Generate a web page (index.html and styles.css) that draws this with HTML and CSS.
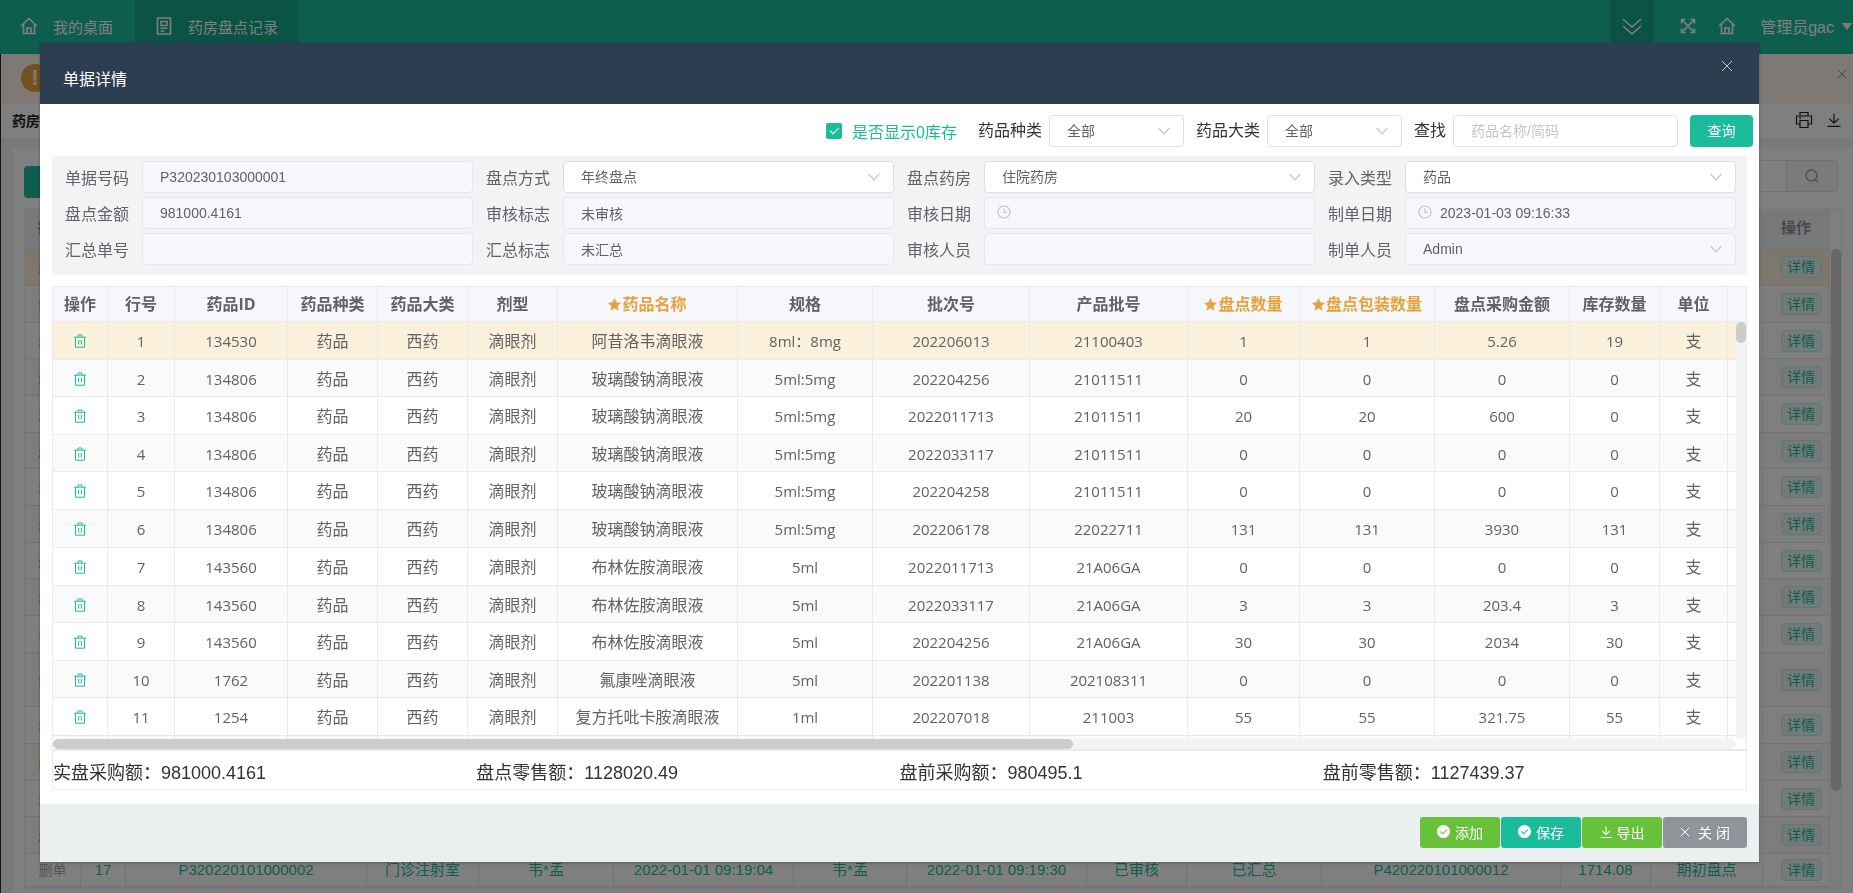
FILE: index.html
```html
<!DOCTYPE html>
<html lang="zh-CN">
<head>
  <meta charset="UTF-8">
  <meta name="viewport" content="width=device-width, initial-scale=1.0">
  <title>药房盘点记录</title>
  <link rel="stylesheet" href="styles.css">
</head>
<body>
  <!-- Icon sprite -->
  <svg class="sprite" aria-hidden="true">
    <symbol id="i-home" viewBox="0 0 18 18"><path d="M1 9 L9 1.5 L17 9 M3.5 7.5 V16.5 H14.5 V7.5 M7 16 V11 H11 V16"/></symbol>
    <symbol id="i-doc" viewBox="0 0 16 18"><path d="M1.5 1 H14.5 V17 H1.5 Z M5 4.5 H11 V8.5 H5 Z M4.5 11.2 H11.5 M4.5 14 H8.5"/></symbol>
    <symbol id="i-double-down" viewBox="0 0 20 18"><path d="M1 1 L10 9 L19 1 M1 8 L10 16 L19 8"/></symbol>
    <symbol id="i-full" viewBox="0 0 16 16"><path d="M1.5 5.5 V1.5 H5.5 M10.5 1.5 H14.5 V5.5 M14.5 10.5 V14.5 H10.5 M5.5 14.5 H1.5 V10.5 M2 2 L14 14 M14 2 L2 14"/></symbol>
    <symbol id="i-close" viewBox="0 0 12 12"><path d="M1 1 L11 11 M11 1 L1 11"/></symbol>
    <symbol id="i-down" viewBox="0 0 12 8"><path d="M0.7 1 L6 6.8 L11.3 1"/></symbol>
    <symbol id="i-clock" viewBox="0 0 14 14"><path d="M7 1 A6 6 0 1 1 6.9 1 Z M7 3.5 V7.5 H10"/></symbol>
    <symbol id="i-trash" viewBox="0 0 14 14"><path d="M1 3.2 H13 M5 3 V1 H9 V3 M2.5 3.2 V13.2 H11.5 V3.2 M5.7 6 V10.5 M8.3 6 V10.5"/></symbol>
    <symbol id="i-star" viewBox="0 0 12 12"><path d="M6 0 L7.7 4 L12 4.5 L8.8 7.4 L9.7 11.7 L6 9.5 L2.3 11.7 L3.2 7.4 L0 4.5 L4.3 4 Z"/></symbol>
    <symbol id="i-print" viewBox="0 0 18 18"><path d="M5 5 V1.5 H13 V5 M5 13 H1.5 V5 H16.5 V13 H13 M5 9.5 H13 V16.5 H5 Z M4 7.2 H6"/></symbol>
    <symbol id="i-download" viewBox="0 0 14 14"><path d="M7 0.5 V10 M2.5 5.8 L7 10.2 L11.5 5.8 M0.5 13.3 H13.5"/></symbol>
    <symbol id="i-search" viewBox="0 0 14 14"><path d="M6.5 1 A5.5 5.5 0 1 1 6.4 1 Z M10.5 10.8 L12.8 13"/></symbol>
    <symbol id="i-ok" viewBox="0 0 14 14"><path fill-rule="evenodd" d="M7 0 A7 7 0 1 1 6.9 0 Z M6.2 10.3 L11 5.3 L10.2 4.5 L6.2 8.6 L4 6.5 L3.2 7.3 Z"/></symbol>
  </svg>

  <!-- Page behind the dialog -->
  <header class="topbar">
    <nav class="tabs">
      <a class="tab" href="#"><svg class="icon icon-18"><use href="#i-home"/></svg>我的桌面</a>
      <a class="tab active" href="#"><svg class="icon icon-18"><use href="#i-doc"/></svg>药房盘点记录</a>
    </nav>
    <div class="tools">
      <button class="tool tool-more" aria-label="更多"><svg class="icon icon-20"><use href="#i-double-down"/></svg></button>
      <button class="tool" aria-label="全屏"><svg class="icon icon-16"><use href="#i-full"/></svg></button>
      <button class="tool" aria-label="首页"><svg class="icon icon-18"><use href="#i-home"/></svg></button>
      <button class="user">管理员gac<span class="caret"></span></button>
    </div>
  </header>
  <main class="page">
    <div class="notice">
      <span class="notice-icon">!</span>
      <button class="plain" aria-label="关闭提示"><svg class="icon icon-10"><use href="#i-close"/></svg></button>
    </div>
    <div class="page-title">
      <strong>药房盘点记录</strong>
      <div class="page-tools">
        <button class="plain" aria-label="打印"><svg class="icon icon-18"><use href="#i-print"/></svg></button>
        <button class="plain" aria-label="下载"><svg class="icon icon-14"><use href="#i-download"/></svg></button>
      </div>
    </div>
    <section class="card">
      <div class="card-bar">
        <button class="btn-new" aria-label="新增"></button>
        <div class="search">
          <input type="text" aria-label="搜索">
          <button aria-label="搜索"><svg class="icon icon-14"><use href="#i-search"/></svg></button>
        </div>
      </div>
      <div class="list-wrap">
        <table class="list">
          <colgroup>
            <col class="w56"><col class="w45"><col class="w241"><col class="w112"><col class="w135"><col class="w180"><col class="w113"><col class="w180"><col class="w100"><col class="w135"><col><col class="w90"><col class="w112"><col class="w67">
          </colgroup>
          <thead>
            <tr><th>操作</th><th colspan="12"></th><th>操作</th></tr>
          </thead>
          <tbody>
            <tr class="current"><td class="del">删单</td><td colspan="12"></td><td><a class="tag" href="#">详情</a></td></tr>
            <tr><td class="del">删单</td><td colspan="12"></td><td><a class="tag" href="#">详情</a></td></tr>
            <tr><td class="del">删单</td><td colspan="12"></td><td><a class="tag" href="#">详情</a></td></tr>
            <tr><td class="del">删单</td><td colspan="12"></td><td><a class="tag" href="#">详情</a></td></tr>
            <tr><td class="del">删单</td><td colspan="12"></td><td><a class="tag" href="#">详情</a></td></tr>
            <tr><td class="del">删单</td><td colspan="12"></td><td><a class="tag" href="#">详情</a></td></tr>
            <tr><td class="del">删单</td><td colspan="12"></td><td><a class="tag" href="#">详情</a></td></tr>
            <tr><td class="del">删单</td><td colspan="12"></td><td><a class="tag" href="#">详情</a></td></tr>
            <tr><td class="del">删单</td><td colspan="12"></td><td><a class="tag" href="#">详情</a></td></tr>
            <tr><td class="del">删单</td><td colspan="12"></td><td><a class="tag" href="#">详情</a></td></tr>
            <tr><td class="del">删单</td><td colspan="12"></td><td><a class="tag" href="#">详情</a></td></tr>
            <tr class="tall"><td class="del">删单</td><td colspan="12"></td><td><a class="tag" href="#">详情</a></td></tr>
            <tr><td class="del">删单</td><td colspan="12"></td><td><a class="tag" href="#">详情</a></td></tr>
            <tr><td class="del">删单</td><td colspan="12"></td><td><a class="tag" href="#">详情</a></td></tr>
            <tr><td class="del">删单</td><td colspan="12"></td><td><a class="tag" href="#">详情</a></td></tr>
            <tr><td class="del">删单</td><td colspan="12"></td><td><a class="tag" href="#">详情</a></td></tr>
            <tr><td class="off">删单</td><td>17</td><td>P320220101000002</td><td>门诊注射室</td><td>韦*孟</td><td>2022-01-01 09:19:04</td><td>韦*孟</td><td>2022-01-01 09:19:30</td><td>已审核</td><td>已汇总</td><td>P420220101000012</td><td>1714.08</td><td>期初盘点</td><td><a class="tag" href="#">详情</a></td></tr>
          </tbody>
        </table>
        <div class="list-scroll"><span></span></div>
      </div>
    </section>
  </main>

  <!-- Dialog -->
  <div class="mask">
    <div class="dialog" role="dialog" aria-labelledby="dialogTitle">
      <div class="dialog-head">
        <h1 id="dialogTitle">单据详情</h1>
        <button class="plain" aria-label="关闭"><svg class="icon icon-12"><use href="#i-close"/></svg></button>
      </div>

      <form class="filters">
        <label class="check"><input type="checkbox" checked>是否显示0库存</label>
        <div class="filter">
          <label for="kind">药品种类</label>
          <div class="control short"><select id="kind"><option>全部</option></select><svg class="icon arrow"><use href="#i-down"/></svg></div>
        </div>
        <div class="filter">
          <label for="category">药品大类</label>
          <div class="control short"><select id="category"><option>全部</option></select><svg class="icon arrow"><use href="#i-down"/></svg></div>
        </div>
        <div class="filter">
          <label for="keyword">查找</label>
          <div class="control keyword"><input id="keyword" type="text" placeholder="药品名称/简码"></div>
        </div>
        <button type="button" class="btn-query">查询</button>
      </form>

      <form class="detail">
        <div class="field"><label for="f1">单据号码</label><div class="control"><input id="f1" type="text" value="P320230103000001" disabled></div></div>
        <div class="field"><label for="f2">盘点方式</label><div class="control"><select id="f2"><option>年终盘点</option></select><svg class="icon arrow"><use href="#i-down"/></svg></div></div>
        <div class="field"><label for="f3">盘点药房</label><div class="control"><select id="f3"><option>住院药房</option></select><svg class="icon arrow"><use href="#i-down"/></svg></div></div>
        <div class="field"><label for="f4">录入类型</label><div class="control"><select id="f4"><option>药品</option></select><svg class="icon arrow"><use href="#i-down"/></svg></div></div>
        <div class="field"><label for="f5">盘点金额</label><div class="control"><input id="f5" type="text" value="981000.4161" disabled></div></div>
        <div class="field"><label for="f6">审核标志</label><div class="control"><input id="f6" type="text" value="未审核" disabled></div></div>
        <div class="field"><label for="f7">审核日期</label><div class="control date"><input id="f7" type="text" disabled><svg class="icon clock"><use href="#i-clock"/></svg></div></div>
        <div class="field"><label for="f8">制单日期</label><div class="control date"><input id="f8" type="text" value="2023-01-03 09:16:33" disabled><svg class="icon clock"><use href="#i-clock"/></svg></div></div>
        <div class="field"><label for="f9">汇总单号</label><div class="control"><input id="f9" type="text" disabled></div></div>
        <div class="field"><label for="f10">汇总标志</label><div class="control"><input id="f10" type="text" value="未汇总" disabled></div></div>
        <div class="field"><label for="f11">审核人员</label><div class="control"><input id="f11" type="text" disabled></div></div>
        <div class="field"><label for="f12">制单人员</label><div class="control"><select id="f12" disabled><option>Admin</option></select><svg class="icon arrow"><use href="#i-down"/></svg></div></div>
      </form>

      <div class="grid-wrap">
        <div class="grid-view">
          <table class="grid">
            <colgroup>
              <col class="w55"><col class="w67"><col class="w113"><col class="w90"><col class="w90"><col class="w90"><col class="w180"><col class="w135"><col class="w157"><col class="w158"><col class="w112"><col class="w135"><col class="w135"><col class="w90"><col class="w68"><col>
            </colgroup>
            <thead>
              <tr>
                <th>操作</th><th>行号</th><th>药品ID</th><th>药品种类</th><th>药品大类</th><th>剂型</th>
                <th class="edit"><svg class="star"><use href="#i-star"/></svg>药品名称</th>
                <th>规格</th><th>批次号</th><th>产品批号</th>
                <th class="edit"><svg class="star"><use href="#i-star"/></svg>盘点数量</th>
                <th class="edit"><svg class="star"><use href="#i-star"/></svg>盘点包装数量</th>
                <th>盘点采购金额</th><th>库存数量</th><th>单位</th><th></th>
              </tr>
            </thead>
            <tbody>
              <tr class="current"><td><button class="trash" aria-label="删除"><svg class="icon icon-14"><use href="#i-trash"/></svg></button></td><td>1</td><td>134530</td><td class="cn">药品</td><td class="cn">西药</td><td class="cn">滴眼剂</td><td class="cn">阿昔洛韦滴眼液</td><td>8ml：8mg</td><td>202206013</td><td>21100403</td><td>1</td><td>1</td><td>5.26</td><td>19</td><td class="cn">支</td><td></td></tr>
              <tr><td><button class="trash" aria-label="删除"><svg class="icon icon-14"><use href="#i-trash"/></svg></button></td><td>2</td><td>134806</td><td class="cn">药品</td><td class="cn">西药</td><td class="cn">滴眼剂</td><td class="cn">玻璃酸钠滴眼液</td><td>5ml:5mg</td><td>202204256</td><td>21011511</td><td>0</td><td>0</td><td>0</td><td>0</td><td class="cn">支</td><td></td></tr>
              <tr><td><button class="trash" aria-label="删除"><svg class="icon icon-14"><use href="#i-trash"/></svg></button></td><td>3</td><td>134806</td><td class="cn">药品</td><td class="cn">西药</td><td class="cn">滴眼剂</td><td class="cn">玻璃酸钠滴眼液</td><td>5ml:5mg</td><td>2022011713</td><td>21011511</td><td>20</td><td>20</td><td>600</td><td>0</td><td class="cn">支</td><td></td></tr>
              <tr><td><button class="trash" aria-label="删除"><svg class="icon icon-14"><use href="#i-trash"/></svg></button></td><td>4</td><td>134806</td><td class="cn">药品</td><td class="cn">西药</td><td class="cn">滴眼剂</td><td class="cn">玻璃酸钠滴眼液</td><td>5ml:5mg</td><td>2022033117</td><td>21011511</td><td>0</td><td>0</td><td>0</td><td>0</td><td class="cn">支</td><td></td></tr>
              <tr><td><button class="trash" aria-label="删除"><svg class="icon icon-14"><use href="#i-trash"/></svg></button></td><td>5</td><td>134806</td><td class="cn">药品</td><td class="cn">西药</td><td class="cn">滴眼剂</td><td class="cn">玻璃酸钠滴眼液</td><td>5ml:5mg</td><td>202204258</td><td>21011511</td><td>0</td><td>0</td><td>0</td><td>0</td><td class="cn">支</td><td></td></tr>
              <tr><td><button class="trash" aria-label="删除"><svg class="icon icon-14"><use href="#i-trash"/></svg></button></td><td>6</td><td>134806</td><td class="cn">药品</td><td class="cn">西药</td><td class="cn">滴眼剂</td><td class="cn">玻璃酸钠滴眼液</td><td>5ml:5mg</td><td>202206178</td><td>22022711</td><td>131</td><td>131</td><td>3930</td><td>131</td><td class="cn">支</td><td></td></tr>
              <tr><td><button class="trash" aria-label="删除"><svg class="icon icon-14"><use href="#i-trash"/></svg></button></td><td>7</td><td>143560</td><td class="cn">药品</td><td class="cn">西药</td><td class="cn">滴眼剂</td><td class="cn">布林佐胺滴眼液</td><td>5ml</td><td>2022011713</td><td>21A06GA</td><td>0</td><td>0</td><td>0</td><td>0</td><td class="cn">支</td><td></td></tr>
              <tr><td><button class="trash" aria-label="删除"><svg class="icon icon-14"><use href="#i-trash"/></svg></button></td><td>8</td><td>143560</td><td class="cn">药品</td><td class="cn">西药</td><td class="cn">滴眼剂</td><td class="cn">布林佐胺滴眼液</td><td>5ml</td><td>2022033117</td><td>21A06GA</td><td>3</td><td>3</td><td>203.4</td><td>3</td><td class="cn">支</td><td></td></tr>
              <tr><td><button class="trash" aria-label="删除"><svg class="icon icon-14"><use href="#i-trash"/></svg></button></td><td>9</td><td>143560</td><td class="cn">药品</td><td class="cn">西药</td><td class="cn">滴眼剂</td><td class="cn">布林佐胺滴眼液</td><td>5ml</td><td>202204256</td><td>21A06GA</td><td>30</td><td>30</td><td>2034</td><td>30</td><td class="cn">支</td><td></td></tr>
              <tr><td><button class="trash" aria-label="删除"><svg class="icon icon-14"><use href="#i-trash"/></svg></button></td><td>10</td><td>1762</td><td class="cn">药品</td><td class="cn">西药</td><td class="cn">滴眼剂</td><td class="cn">氟康唑滴眼液</td><td>5ml</td><td>202201138</td><td>202108311</td><td>0</td><td>0</td><td>0</td><td>0</td><td class="cn">支</td><td></td></tr>
              <tr><td><button class="trash" aria-label="删除"><svg class="icon icon-14"><use href="#i-trash"/></svg></button></td><td>11</td><td>1254</td><td class="cn">药品</td><td class="cn">西药</td><td class="cn">滴眼剂</td><td class="cn">复方托吡卡胺滴眼液</td><td>1ml</td><td>202207018</td><td>211003</td><td>55</td><td>55</td><td>321.75</td><td>55</td><td class="cn">支</td><td></td></tr>
              <tr><td></td><td></td><td></td><td></td><td></td><td></td><td></td><td></td><td></td><td></td><td></td><td></td><td></td><td></td><td></td><td></td></tr>
            </tbody>
          </table>
          <div class="scroll-y"><span></span></div>
        </div>
        <div class="scroll-x"><span></span></div>
        <div class="totals">
          <span>实盘采购额：981000.4161</span>
          <span>盘点零售额：1128020.49</span>
          <span>盘前采购额：980495.1</span>
          <span>盘前零售额：1127439.37</span>
        </div>
      </div>

      <div class="dialog-foot">
        <button class="btn green"><svg class="solid"><use href="#i-ok"/></svg>添加</button>
        <button class="btn teal"><svg class="solid"><use href="#i-ok"/></svg>保存</button>
        <button class="btn green"><svg class="icon icon-12"><use href="#i-download"/></svg>导出</button>
        <button class="btn gray"><svg class="icon icon-10"><use href="#i-close"/></svg>关 闭</button>
      </div>
    </div>
  </div>
</body>
</html>
```

FILE: styles.css
```css
* {
  box-sizing: border-box;
}

body {
  margin: 0;
  height: 100vh;
  overflow: hidden;
  display: flex;
  flex-direction: column;
  background: #fff;
  color: #606266;
  font-family: "Liberation Sans", "Noto Sans CJK SC", sans-serif;
  font-size: 16px;
}

button,
input,
select {
  font-family: inherit;
  font-size: 14px;
  margin: 0;
}

button {
  border: 0;
  padding: 0;
  background: none;
  color: inherit;
  cursor: pointer;
}

a {
  color: inherit;
  text-decoration: none;
}

/* Icons */
.sprite {
  position: absolute;
  width: 0;
  height: 0;
}

.icon {
  display: block;
  flex: none;
  fill: none;
  stroke: currentColor;
  stroke-width: 1.2;
}

.icon-10 { width: 10px; height: 10px; }
.icon-12 { width: 12px; height: 12px; }
.icon-14 { width: 14px; height: 14px; }
.icon-16 { width: 16px; height: 16px; }
.icon-18 { width: 18px; height: 18px; }
.icon-20 { width: 20px; height: 18px; }

.solid {
  width: 13px;
  height: 13px;
  fill: currentColor;
}

.plain {
  display: flex;
}

/* Top bar */
.topbar {
  flex: none;
  height: 54px;
  display: flex;
  justify-content: space-between;
  background: #1abc9c;
  color: #fff;
}

.topbar .icon {
  stroke-width: 1.6;
}

.tabs,
.tools {
  display: flex;
}

.tab {
  display: flex;
  align-items: center;
  gap: 15px;
  padding: 0 22px 2px 20px;
  font-size: 15px;
}

.tab.active {
  padding-right: 20px;
  background: #17a689;
}

.tools {
  align-items: center;
  padding-bottom: 2px;
}

.tool {
  display: flex;
  margin-right: 22px;
}

.tool-more {
  align-items: center;
  height: 54px;
  padding: 0 12px;
  margin-right: 26px;
  margin-bottom: -2px;
  background: #17a689;
}

.user {
  display: flex;
  align-items: center;
  gap: 8px;
  padding-right: 1px;
  padding-left: 2px;
  font-size: 16px;
}

.caret {
  border: 5px solid transparent;
  border-top: 7px solid #fff;
  border-bottom: 0;
}

/* Page content */
.page {
  flex: 1;
  display: flex;
  flex-direction: column;
  border-left: 1px solid #222;
  background: #f0f2f5;
}

.notice {
  height: 50px;
  flex: none;
  display: flex;
  align-items: center;
  justify-content: space-between;
  padding: 0 6px 2px 20px;
  background: #fdf3e8;
  color: #909399;
}

.notice .plain {
  padding-bottom: 8px;
}

.notice-icon {
  width: 28px;
  height: 28px;
  border-radius: 50%;
  background: #e6a23c;
  color: #fdf3e8;
  font-size: 22px;
  font-weight: bold;
  line-height: 28px;
  text-align: center;
}

.page-title {
  height: 34px;
  flex: none;
  display: flex;
  align-items: center;
  justify-content: space-between;
  padding: 0 12px 3px 11px;
  background: #fff;
  color: #222;
  font-size: 14px;
}

.page-tools {
  display: flex;
  align-items: center;
  gap: 14px;
}

.card {
  flex: 1;
  margin: 11px 0 0 12px;
  padding: 11px 11px 0;
  background: #fff;
}

.card-bar {
  display: flex;
  justify-content: space-between;
  height: 49px;
}

.btn-new {
  width: 80px;
  height: 32px;
  margin-top: 6px;
  border-radius: 4px;
  background: #1abc9c;
}

.search {
  display: flex;
  height: 32px;
  margin-right: 4px;
  border: 1px solid #dcdfe6;
  border-radius: 4px;
  overflow: hidden;
}

.search input {
  width: 200px;
  border: 0;
  border-right: 1px solid #dcdfe6;
}

.search button {
  width: 50px;
  display: flex;
  align-items: center;
  justify-content: center;
  background: #f5f7fa;
  color: #909399;
}

.list-wrap {
  position: relative;
  padding-right: 11px;
  border: 1px solid #ebeef5;
  border-bottom-width: 3px;
}

.list {
  width: 100%;
  table-layout: fixed;
  border-collapse: separate;
  border-spacing: 0;
  color: #1abc9c;
  font-size: 15px;
}

.list th,
.list td {
  height: 37px;
  padding: 0;
  border-right: 1px solid #e3e7ef;
  border-bottom: 1px solid #e3e7ef;
  text-align: center;
  line-height: 20px;
  white-space: nowrap;
}

.list th {
  height: 39px;
  padding-bottom: 2px;
  background: #f0f2f7;
  color: #909399;
}

.list td:last-child {
  padding-left: 10px;
}

.list tr:nth-child(3n) td { height: 36px; }
.list tr.tall td { height: 54px; }
.list tr:last-child td { height: 33px; }
.list tr:nth-child(even) td { background: #fafafa; }
.list tr.current td { background: #fbf0d6; }

.list .del,
.list .off {
  color: #f56c6c;
  font-size: 14px;
}

.list .off {
  color: #a8abb2;
}

.tag {
  display: inline-block;
  width: 41px;
  height: 22px;
  border: 1px solid #c5ece4;
  border-radius: 4px;
  background: #e4f6f3;
  font-size: 14px;
  line-height: 20px;
}

.list-scroll {
  position: absolute;
  top: 39px;
  right: 0;
  bottom: 0;
  width: 10px;
  background: #fafafa;
}

.list-scroll span {
  display: block;
  height: 85%;
  border-radius: 5px;
  background: #ccc;
}

/* Dialog */
.mask {
  position: fixed;
  inset: 0;
  display: flex;
  padding: 43px 94px 31px 40px;
  background: rgba(0, 0, 0, 0.5);
}

.dialog {
  flex: 1;
  min-width: 0;
  display: flex;
  flex-direction: column;
  background: #fff;
  box-shadow: 0 1px 3px rgba(0, 0, 0, 0.3);
}

.dialog-head {
  flex: none;
  height: 61px;
  display: flex;
  justify-content: space-between;
  padding: 17px 26px 0 23px;
  background: #2e3e51;
  color: #c0c4cc;
}

.dialog-head h1 {
  margin: 0;
  color: #fff;
  font-size: 16px;
  font-weight: normal;
  line-height: 40px;
}

.dialog-head .icon {
  stroke-width: 1;
}

/* Inputs */
.control {
  position: relative;
  flex: 1;
  min-width: 0;
}

.control input,
.control select {
  display: block;
  width: 100%;
  height: 32px;
  padding: 0 17px;
  border: 1px solid #dcdfe6;
  border-radius: 4px;
  outline: 0;
  background: #fff;
  color: #606266;
  appearance: none;
}

.control input::placeholder {
  color: #c0c4cc;
}

.control input:disabled,
.control select:disabled {
  border-color: #e4e7ed;
  background: #f5f7fa;
  opacity: 1;
}

.arrow,
.clock {
  position: absolute;
  top: 12px;
  right: 14px;
  width: 12px;
  height: 8px;
  color: #c0c4cc;
  pointer-events: none;
}

.clock {
  top: 8px;
  left: 13px;
  width: 14px;
  height: 14px;
}

.control.date input {
  padding-left: 34px;
}

/* Filter row */
.filters {
  flex: none;
  display: flex;
  align-items: center;
  justify-content: flex-end;
  height: 52px;
  padding: 2px 6px 0 12px;
  color: #333;
}

.check {
  display: flex;
  align-items: center;
  gap: 10px;
  margin-right: 21px;
  color: #1abc9c;
}

.check input {
  width: 16px;
  height: 16px;
  border-radius: 2px;
  background: #1abc9c;
  appearance: none;
}

.check input:checked::after {
  content: "";
  display: block;
  width: 4px;
  height: 8px;
  margin: 2px 0 0 6px;
  border: 1px solid #fff;
  border-top: 0;
  border-left: 0;
  transform: rotate(45deg);
}

.filter {
  display: flex;
  align-items: center;
  gap: 7px;
  margin-right: 12px;
}

.filter label {
  line-height: 24px;
}

.short {
  width: 135px;
}

.keyword {
  width: 225px;
}

.btn-query {
  width: 63px;
  height: 32px;
  padding-bottom: 3px;
  border-radius: 4px;
  background: #1abc9c;
  color: #fff;
}

/* Document fields */
.detail {
  flex: none;
  display: grid;
  grid-template-columns: repeat(4, 1fr);
  gap: 4px 13px;
  margin: 0 12px;
  padding: 5px 11px 10px 13px;
  background: #f2f3f5;
}

.field {
  display: flex;
  align-items: center;
  gap: 13px;
}

.field label {
  padding-top: 4px;
  line-height: 24px;
}

/* Stock table */
.grid-wrap {
  flex: 1;
  min-height: 0;
  display: flex;
  flex-direction: column;
  margin: 11px 12px 14px;
  border: 1px solid #e8eaec;
}

.grid-view {
  position: relative;
  flex: 1;
  min-height: 0;
  overflow: hidden;
}

.grid {
  width: 100%;
  table-layout: fixed;
  border-collapse: separate;
  border-spacing: 0;
  font-family: "Open Sans", "Noto Sans CJK SC", sans-serif;
  font-size: 15px;
}

.grid th,
.grid td {
  height: 38px;
  padding: 0;
  border-right: 1px solid #e8eaec;
  border-bottom: 1px solid #e8eaec;
  text-align: center;
  line-height: 24px;
  white-space: nowrap;
}

.grid td {
  padding-top: 1px;
}

.grid th {
  height: 35px;
  background: #f5f7fa;
  font-size: 16px;
  font-weight: bold;
}

.grid th:last-child,
.grid td:last-child {
  border-right: 0;
}

.grid tr:nth-child(even) td {
  height: 37px;
  background: #fafafa;
}

.grid tr:nth-child(6) td {
  height: 38px;
}

.grid tr.current td {
  background: #faf0dc;
}

.grid .cn {
  font-size: 16px;
}

.grid .edit {
  color: #e6a23c;
}

.star {
  width: 13px;
  height: 13px;
  margin-right: 1px;
  vertical-align: -1px;
  fill: currentColor;
}

.trash {
  display: block;
  margin: 0 auto;
  color: #1abc9c;
}

.trash .icon {
  stroke-width: 1;
}

.w45 { width: 45px; }
.w55 { width: 55px; }
.w56 { width: 56px; }
.w67 { width: 67px; }
.w68 { width: 68px; }
.w90 { width: 90px; }
.w100 { width: 100px; }
.w112 { width: 112px; }
.w113 { width: 113px; }
.w135 { width: 135px; }
.w157 { width: 157px; }
.w158 { width: 158px; }
.w180 { width: 180px; }
.w241 { width: 241px; }

/* Scroll tracks */
.scroll-y {
  position: absolute;
  top: 35px;
  right: 0;
  bottom: 0;
  width: 10px;
  border-radius: 5px;
  background: #f3f3f3;
}

.scroll-y span {
  display: block;
  height: 21px;
  border-radius: 5px;
  background: #ccc;
}

.scroll-x {
  flex: none;
  height: 10px;
  margin-right: 10px;
  border-radius: 5px;
  background: #f3f3f3;
}

.scroll-x span {
  display: block;
  width: 60.6%;
  height: 10px;
  border-radius: 5px;
  background: #ccc;
}

.totals {
  flex: none;
  display: grid;
  grid-template-columns: repeat(4, 1fr);
  padding-top: 6px;
  border-top: 2px solid #e8eaec;
  color: #333;
  font-size: 18px;
  line-height: 32px;
}

/* Dialog footer */
.dialog-foot {
  flex: none;
  display: flex;
  align-items: flex-start;
  justify-content: flex-end;
  gap: 1px;
  height: 58px;
  padding: 13px 12px 0;
  background: #ebeff0;
}

.btn {
  display: flex;
  align-items: center;
  justify-content: center;
  gap: 5px;
  width: 80px;
  height: 31px;
  padding-bottom: 2px;
  border-radius: 3px;
  color: #fff;
}

.green { background: #67c23a; }
.teal { background: #1abc9c; }

.gray {
  width: 84px;
  gap: 8px;
  background: #909399;
}
```
